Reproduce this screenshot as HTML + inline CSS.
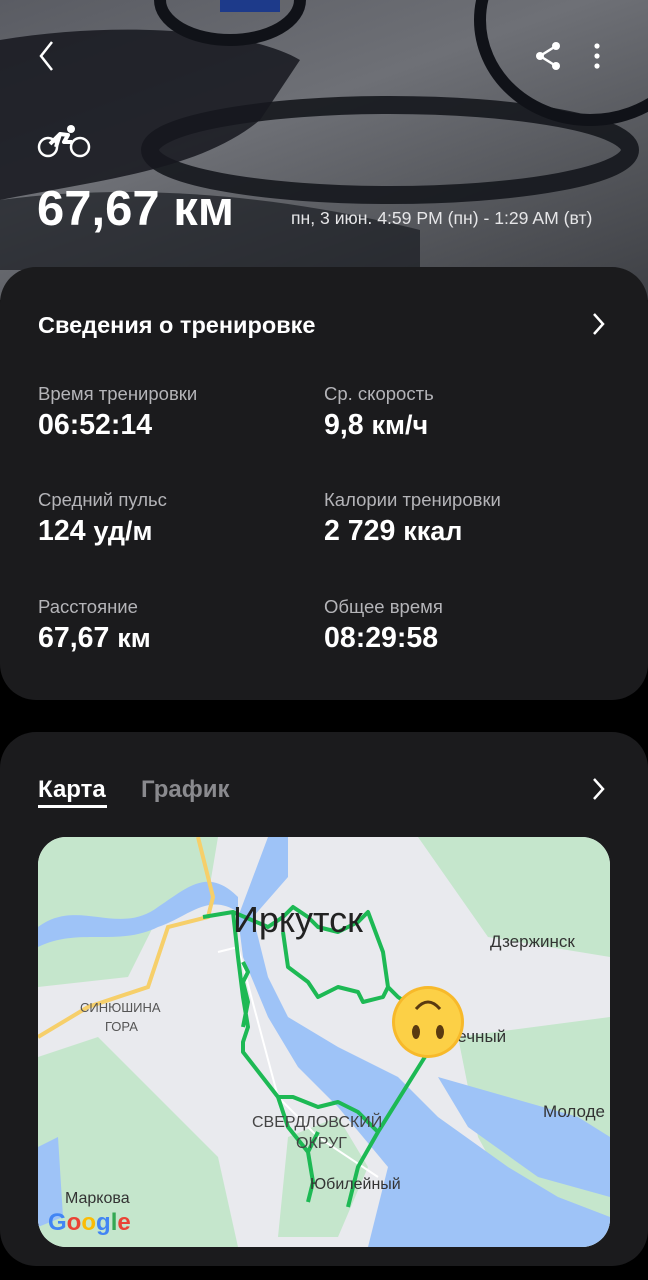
<!DOCTYPE html>
<html><head><meta charset="utf-8"><style>
*{margin:0;padding:0;box-sizing:border-box}
body{width:648px;height:1280px;background:#000;font-family:"Liberation Sans",sans-serif;color:#fff;position:relative;overflow:hidden}
.hdr{position:absolute;left:0;top:0;width:648px;height:300px;background:linear-gradient(160deg,#5a5c63 0%,#6e7076 40%,#55575c 70%,#3e4045 100%);overflow:hidden}
.card{position:absolute;left:0;width:648px;background:#1b1b1d;border-radius:36px}
.lbl{position:absolute;font-size:18.5px;color:#b4b4b8}
.val{position:absolute;font-size:28.5px;font-weight:bold;color:#fff}
.val small{font-size:27px}
</style></head><body>
<div class="hdr">
<svg width="648" height="300" style="position:absolute;left:0;top:0">
<ellipse cx="390" cy="150" rx="240" ry="45" fill="none" stroke="#15171d" stroke-width="18" opacity=".9"/>
<path d="M0 40 C120 20 250 30 300 60 L260 120 C200 170 100 180 0 200Z" fill="#16181e" opacity=".85"/>
<path d="M0 200 C150 180 300 200 420 230 L420 270 L0 270Z" fill="#1a1c22" opacity=".7"/>
<ellipse cx="230" cy="0" rx="70" ry="40" fill="none" stroke="#101218" stroke-width="12"/>
<ellipse cx="590" cy="20" rx="110" ry="100" fill="none" stroke="#101218" stroke-width="12"/>
<rect x="220" y="0" width="60" height="12" fill="#1d3a8a"/>
</svg>
<svg width="24" height="36" style="position:absolute;left:36px;top:38px"><path d="M16 4 L5 18 L16 32" fill="none" stroke="#fff" stroke-width="2.5"/></svg>
<svg width="30" height="30" style="position:absolute;left:534px;top:41px"><circle cx="22" cy="5" r="4" fill="#fff"/><circle cx="6" cy="15" r="4" fill="#fff"/><circle cx="22" cy="25" r="4" fill="#fff"/><path d="M22 5 L6 15 L22 25" stroke="#fff" stroke-width="2.5" fill="none"/></svg>
<svg width="10" height="30" style="position:absolute;left:592px;top:41px"><circle cx="5" cy="5" r="2.6" fill="#fff"/><circle cx="5" cy="15" r="2.6" fill="#fff"/><circle cx="5" cy="25" r="2.6" fill="#fff"/></svg>
<svg width="56" height="40" style="position:absolute;left:36px;top:122px"><circle cx="12" cy="25" r="9" fill="none" stroke="#fff" stroke-width="2.5"/><circle cx="44" cy="25" r="9" fill="none" stroke="#fff" stroke-width="2.5"/><circle cx="35" cy="7" r="4" fill="#fff"/><path d="M14 22 L24 12 L32 13 L28 20 L36 20 M24 12 L20 25" stroke="#fff" stroke-width="4" fill="none" stroke-linejoin="round"/></svg>
<div style="position:absolute;left:37px;top:181px;font-size:49px;font-weight:bold">67,67 км</div>
<div style="position:absolute;left:291px;top:208px;font-size:17.6px;color:#e6e6e8;white-space:nowrap">пн, 3 июн. 4:59 PM (пн) - 1:29 AM (вт)</div>
</div>

<div class="card" style="top:267px;height:433px">
<div style="position:absolute;left:38px;top:45px;font-size:23.5px;font-weight:bold">Сведения о тренировке</div>
<svg width="16" height="24" style="position:absolute;left:591px;top:45px"><path d="M3 2 L12 12 L3 22" fill="none" stroke="#fff" stroke-width="2.5"/></svg>
<div class="lbl" style="left:38px;top:116px">Время тренировки</div><div class="val" style="left:38px;top:142px">06:52:14</div>
<div class="lbl" style="left:324px;top:116px">Ср. скорость</div><div class="val" style="left:324px;top:142px">9,8 <small>км/ч</small></div>
<div class="lbl" style="left:38px;top:222px">Средний пульс</div><div class="val" style="left:38px;top:248px">124 <small>уд/м</small></div>
<div class="lbl" style="left:324px;top:222px">Калории тренировки</div><div class="val" style="left:324px;top:248px">2 729 <small>ккал</small></div>
<div class="lbl" style="left:38px;top:329px">Расстояние</div><div class="val" style="left:38px;top:355px">67,67 <small>км</small></div>
<div class="lbl" style="left:324px;top:329px">Общее время</div><div class="val" style="left:324px;top:355px">08:29:58</div>
</div>

<div class="card" style="top:732px;height:534px">
<div style="position:absolute;left:38px;top:44px;font-size:24px;font-weight:bold">Карта</div>
<div style="position:absolute;left:38px;top:73px;width:69px;height:3px;background:#fff"></div>
<div style="position:absolute;left:141px;top:44px;font-size:24px;font-weight:bold;color:#8a8a8e">График</div>
<svg width="16" height="24" style="position:absolute;left:591px;top:45px"><path d="M3 2 L12 12 L3 22" fill="none" stroke="#fff" stroke-width="2.5"/></svg>
<div style="position:absolute;left:38px;top:105px;width:572px;height:410px;border-radius:28px;overflow:hidden;background:#e9eaee">
<svg width="572" height="410" style="position:absolute;left:0;top:0" font-family="Liberation Sans">
<path d="M0 0 L180 0 L170 60 L120 80 L90 140 L0 150Z" fill="#c5e6cc"/>
<path d="M0 220 L60 200 L120 260 L180 320 L200 410 L0 410Z" fill="#c5e6cc"/>
<path d="M380 0 L572 0 L572 120 L450 100 Z" fill="#c5e6cc"/>
<path d="M420 200 L572 180 L572 410 L500 410 L440 300Z" fill="#c5e6cc"/>
<path d="M250 300 L300 280 L330 330 L300 400 L240 400Z" fill="#c5e6cc"/>
<path d="M0 90 C40 60 80 100 120 70 C150 50 170 30 200 60 L200 75 C170 55 150 80 120 90 C80 110 40 90 0 110Z" fill="#9ec3f7"/>
<path d="M230 0 L250 0 L250 40 L215 80 L230 140 L250 180 L300 210 L360 240 L400 280 L470 330 L520 360 L572 380 L572 410 L330 410 L350 330 L300 270 L260 230 L230 180 L205 120 L200 80 Z" fill="#9ec3f7"/>
<path d="M400 240 L470 260 L540 280 L572 300 L572 360 L500 340 L430 290Z" fill="#9ec3f7"/>
<path d="M0 310 L20 300 L25 380 L0 390Z" fill="#9ec3f7"/>
<path d="M160 0 L175 60 L170 80 L130 90 L110 150 L50 170 L0 200" fill="none" stroke="#f6cf6a" stroke-width="4"/>
<path d="M180 115 L200 110 L240 260 L280 300 L340 340" fill="none" stroke="#fff" stroke-width="2"/>
<g fill="none" stroke="#1db954" stroke-width="4" stroke-linejoin="round">
<path d="M165 80 L195 75 L200 120 L205 160 L210 190 L205 205 L205 215 L240 260 L250 290 L270 315 M205 125 L210 135 L205 145 L210 165 L205 190 M240 260 L255 260 L280 270 L300 265 L320 275 L340 295 L320 330 L310 370 M280 295 L270 315 L275 345 L270 365 M340 295 L390 215 M195 75 L230 90 L245 80 L255 70 L270 80 L280 90 L300 95 L320 85 L330 75 L345 115 L350 150 L360 160 L390 180 M245 95 L250 130 L270 145 L280 160 L300 150 L320 155 L325 165 L345 160 L350 150"/>
</g>
<text x="195" y="95" font-size="36" fill="#222">Иркутск</text>
<text x="452" y="110" font-size="17" fill="#333">Дзержинск</text>
<text x="400" y="205" font-size="17" fill="#333">лнечный</text>
<text x="505" y="280" font-size="17" fill="#333">Молоде</text>
<text x="214" y="290" font-size="16" fill="#444">СВЕРДЛОВСКИЙ</text>
<text x="258" y="311" font-size="16" fill="#444">ОКРУГ</text>
<text x="272" y="352" font-size="16" fill="#333">Юбилейный</text>
<text x="42" y="175" font-size="13" fill="#555">СИНЮШИНА</text>
<text x="67" y="194" font-size="13" fill="#555">ГОРА</text>
<text x="27" y="366" font-size="16" fill="#333">Маркова</text>
<text x="10" y="393" font-size="24" font-weight="bold"><tspan fill="#4285f4">G</tspan><tspan fill="#ea4335">o</tspan><tspan fill="#fbbc05">o</tspan><tspan fill="#4285f4">g</tspan><tspan fill="#34a853">l</tspan><tspan fill="#ea4335">e</tspan></text>
<circle cx="390" cy="185" r="36" fill="#f7b92a"/>
<circle cx="390" cy="185" r="33" fill="#fcd046"/>
<ellipse cx="378" cy="195" rx="4" ry="7" fill="#5a3a10"/>
<ellipse cx="402" cy="195" rx="4" ry="7" fill="#5a3a10"/>
<path d="M378 172 Q390 158 402 172" fill="none" stroke="#5a3a10" stroke-width="3"/>
</svg>
</div>
</div>
</body></html>
